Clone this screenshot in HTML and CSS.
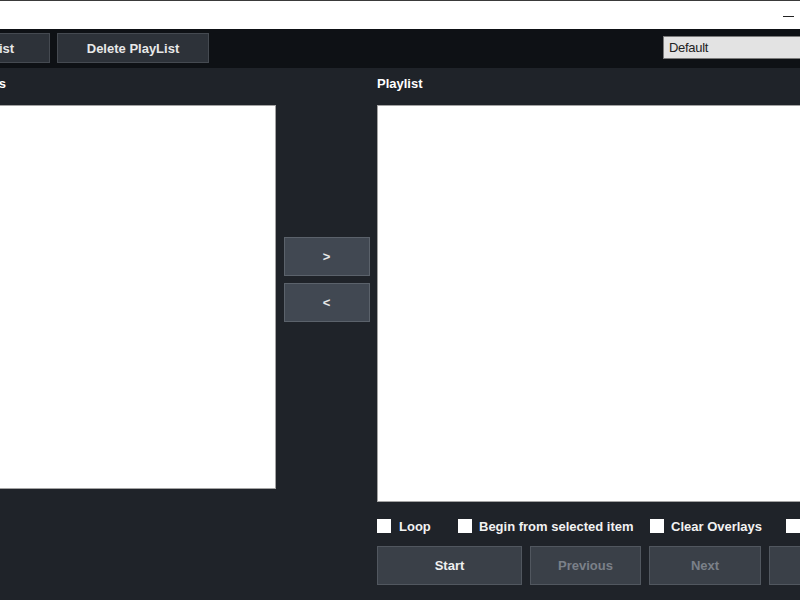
FILE: index.html
```html
<!DOCTYPE html>
<html>
<head>
<meta charset="utf-8">
<link rel="stylesheet" href="styles.css">
</head>
<body>
<div class="titlebar"><span class="minimize"></span></div>
<div class="toolbar">
  <button class="tbtn first">New PlayList</button>
  <button class="tbtn">Delete PlayList</button>
  <div class="spacer"></div>
  <div class="combo">Default</div>
</div>
<div class="main">
  <div class="col left">
    <div class="label">Items</div>
    <div class="list list-left"></div>
  </div>
  <div class="col mid">
    <button class="mbtn">&gt;</button>
    <button class="mbtn">&lt;</button>
  </div>
  <div class="col right">
    <div class="label">Playlist</div>
    <div class="list list-right"></div>
    <div class="checks">
      <label class="chk w-loop"><span class="box"></span>Loop</label>
      <label class="chk w-begin"><span class="box"></span>Begin from selected item</label>
      <label class="chk w-clear"><span class="box"></span>Clear Overlays</label>
      <label class="chk"><span class="box"></span>Stop on end</label>
    </div>
    <div class="actions">
      <button class="abtn start">Start</button>
      <button class="abtn dis prev">Previous</button>
      <button class="abtn dis next">Next</button>
      <button class="abtn dis stop">Stop</button>
    </div>
  </div>
</div>
</body>
</html>
```

FILE: styles.css
```css
* { box-sizing: border-box; }
html, body { margin: 0; padding: 0; }
body {
  width: 800px;
  height: 600px;
  overflow: hidden;
  background: #1f2329;
  font-family: "Liberation Sans", Arial, sans-serif;
  font-weight: bold;
  font-size: 13px;
  color: #ffffff;
}
.titlebar {
  height: 29px;
  background: #ffffff;
  border-top: 1px solid #3a3a3a;
  display: flex;
  justify-content: flex-end;
  align-items: center;
}
.minimize {
  display: block;
  width: 11px;
  height: 1px;
  background: #222;
  margin-right: 6px;
  margin-top: 2px;
}
.toolbar {
  height: 39px;
  background: #0e1115;
  display: flex;
  align-items: flex-start;
  padding-top: 4px;
  overflow: hidden;
}
.tbtn {
  font: inherit;
  color: #e8e8e8;
  background: #2d3239;
  border: 1px solid #454a51;
  height: 30px;
  width: 152px;
  margin-right: 7px;
  padding: 0;
}
.tbtn.first { margin-left: -102px; }
.spacer { flex: 1; }
.combo {
  margin-top: 3px;
  width: 150px;
  margin-right: -13px;
  height: 23px;
  background: #e3e3e3;
  border: 1px solid #7a7a7a;
  color: #222;
  font-weight: normal;
  font-size: 13px;
  line-height: 21px;
  padding-left: 5px;
  letter-spacing: -0.3px;
}
.main {
  display: flex;
  align-items: flex-start;
}
.label {
  height: 37px;
  line-height: 31px;
  font-size: 13px;
}
.col.left {
  width: 304px;
  margin-left: -28px;
  flex: none;
}
.list {
  background: #ffffff;
  border: 1px solid #a3a3a3;
}
.list-left { height: 384px; }
.col.mid {
  width: 101px;
  flex: none;
  display: flex;
  flex-direction: column;
  align-items: center;
  padding-top: 169px;
  gap: 7px;
}
.mbtn {
  font: inherit;
  color: #e8e8e8;
  background: #414852;
  border: 1px solid #5b626b;
  width: 86px;
  height: 39px;
  padding: 0;
}
.col.right {
  width: 480px;
  flex: none;
}
.list-right { height: 397px; }
.checks {
  display: flex;
  align-items: center;
  height: 44px;
  padding-top: 4px;
  white-space: nowrap;
  overflow: hidden;
}
.chk {
  display: flex;
  align-items: center;
  font-size: 13px;
  color: #f2f2f2;
  flex: none;
}
.box {
  width: 14px;
  height: 14px;
  background: #ffffff;
  margin-right: 8px;
  flex: none;
}
.chk.w-loop { width: 81px; }
.chk.w-begin { width: 192px; }
.chk.w-begin .box, .chk.w-clear .box { margin-right: 7px; }
.chk.w-clear { width: 136px; }
.actions {
  display: flex;
  gap: 8px;
}
.abtn {
  font: inherit;
  color: #f0f0f0;
  background: #3a4048;
  border: 1px solid #51575f;
  height: 39px;
  padding: 0;
  flex: none;
}
.abtn.dis { color: #7b8089; }
.abtn.start { width: 145px; }
.abtn.prev { width: 111px; }
.abtn.next { width: 112px; }
.abtn.stop { width: 112px; }
```
